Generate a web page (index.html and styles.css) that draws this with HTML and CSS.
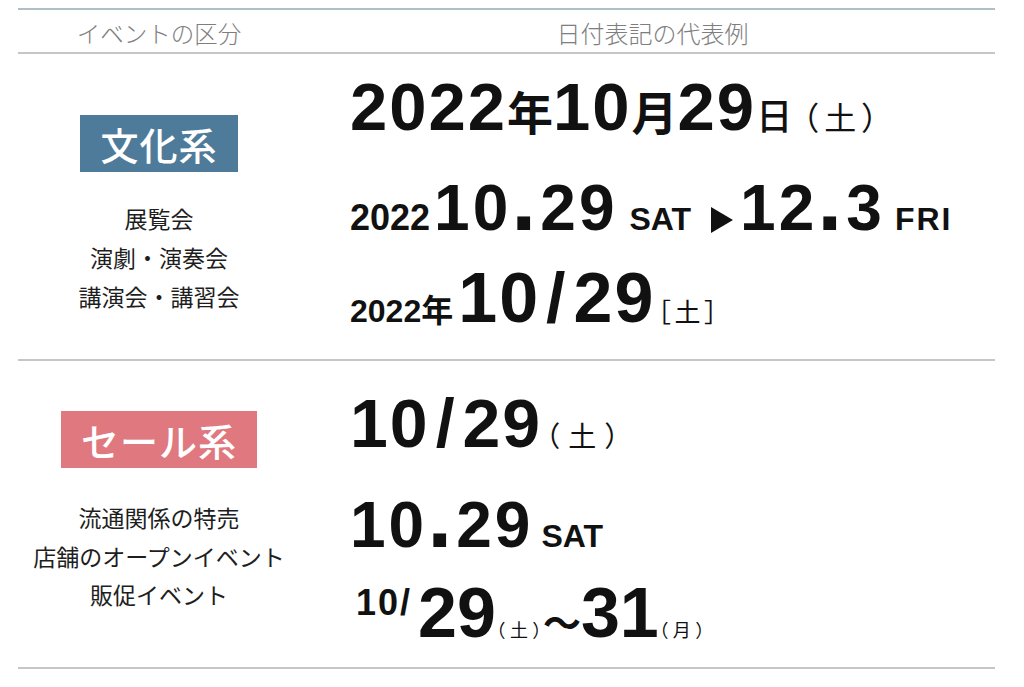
FILE: index.html
```html
<!DOCTYPE html>
<html lang="ja">
<head>
<meta charset="utf-8">
<title>日付表記</title>
<link rel="stylesheet" href="styles.css">
</head>
<body>
<div class="table">
  <div class="head">
    <div class="head-cell head-left">イベントの区分</div>
    <div class="head-cell head-right">日付表記の代表例</div>
  </div>

  <div class="section section-culture">
    <div class="cat">
      <div class="badge badge-blue">文化系</div>
      <ul class="examples">
        <li>展覧会</li>
        <li>演劇・演奏会</li>
        <li>講演会・講習会</li>
      </ul>
    </div>
    <div class="dates">
      <div class="row"><span class="n67">2022</span><span class="jp jb k46">年</span><span class="n67">10</span><span class="jp jb k46">月</span><span class="n67">29</span><span class="jp jm k36">日</span><span class="jp pp p32">（<span class="pin">土</span>）</span></div>
      <div class="row"><span class="n36">2022</span><span class="n64 ml4">10<span class="dot">.</span>29</span><span class="n32 ml12">SAT</span><svg class="arrow" viewBox="0 0 24 28" width="24" height="28"><path d="M1 1 L23 14 L1 27 Z" fill="#111"/></svg><span class="n64 ml6">12<span class="dot">.</span>3</span><span class="n32 fri ml10">FRI</span></div>
      <div class="row"><span class="n32">2022</span><span class="jp jb k32">年</span><span class="n70w ml5">10<span class="slash">/</span>29</span><span class="jp pp p26">［<span class="pin">土</span>］</span></div>
    </div>
  </div>

  <div class="section section-sale">
    <div class="cat">
      <div class="badge badge-pink">セール系</div>
      <ul class="examples">
        <li>流通関係の特売</li>
        <li>店舗のオープンイベント</li>
        <li>販促イベント</li>
      </ul>
    </div>
    <div class="dates">
      <div class="row row95"><span class="n68">10<span class="slash">/</span>29</span><span class="jp pp p28">（<span class="pin">土</span>）</span></div>
      <div class="row row95"><span class="n64">10<span class="dot">.</span>29</span><span class="n32 ml8">SAT</span></div>
      <div class="row row95"><span class="n36 sup ml6">10/</span><span class="n70 ml6">29</span><span class="jp pp p18">（<span class="pin">土</span>）</span><span class="jp jb wave">～</span><span class="n70">31</span><span class="jp pp p18">（<span class="pin">月</span>）</span></div>
    </div>
  </div>
</div>
</body>
</html>
```
FILE: styles.css
```css
* { box-sizing: border-box; }

body {
  margin: 0;
  background: #ffffff;
  color: #111111;
  font-family: "Noto Sans CJK JP", sans-serif;
}

.table {
  margin: 8px 0 0 18px;
  width: 977px;
  border-top: 2px solid #aebfc7;
}

.head {
  display: grid;
  grid-template-columns: 282px 1fr;
  height: 44px;
  border-bottom: 2px solid #c6c6c6;
}

.head-cell {
  padding-top: 4px;
  line-height: 38px;
  font-size: 23.5px;
  font-weight: 300;
  color: #7e7e7e;
  text-align: center;
  font-family: "Noto Sans CJK JP", sans-serif;
}

.head-right { padding-left: 10px; font-size: 24px; }

.section {
  display: grid;
  grid-template-columns: 282px 1fr;
  border-bottom: 2px solid #c6c6c6;
}

.cat {
  display: flex;
  flex-direction: column;
  align-items: center;
}

.section-culture .cat { padding-top: 61px; }
.section-sale .cat { padding-top: 50px; }

.badge {
  height: 57px;
  line-height: 57px;
  padding: 0 20px;
  font-size: 38px;
  font-weight: 500;
  color: #ffffff;
  letter-spacing: 1px;
}

.badge-blue { background: #4f7b9b; }
.badge-pink { background: #e0787f; }

.examples {
  list-style: none;
  margin: 0;
  padding: 0;
  text-align: center;
  font-size: 23px;
  color: #1e1e1e;
}

.section-culture .examples { margin-top: 27px; line-height: 39px; }
.section-sale .examples { margin-top: 30px; line-height: 38.5px; }

.dates {
  padding-left: 50px;
}

.section-culture .dates { padding-top: 4px; padding-bottom: 13px; }
.section-sale .dates { padding-top: 15px; padding-bottom: 6px; }

.row {
  height: 96px;
  line-height: 96px;
  font-family: "Liberation Sans", Arial, sans-serif;
  font-size: 70px;
  font-weight: 700;
  white-space: nowrap;
}

.row95 { height: 95px; line-height: 95px; }

.row span { line-height: 1; }

.n67 { font-size: 67px; letter-spacing: 2px; }
.n70 { font-size: 70px; }
.n70w { font-size: 70px; letter-spacing: 2px; }
.n68 { font-size: 68px; letter-spacing: 2px; }
.n64 { font-size: 64px; letter-spacing: 3px; }
.n36 { font-size: 36px; }
.n32 { font-size: 32px; }
.fri { letter-spacing: 2px; }

.dot { font-size: 90px; letter-spacing: 4px; }
.slash { margin: 0 6px; }

.jp { font-family: "Noto Sans CJK JP", sans-serif; font-weight: 400; }
.jb { font-weight: 700; }
.jm { font-weight: 500; }
.k46 { font-size: 46px; }
.k36 { font-size: 36px; }
.k32 { font-size: 32px; }

.pp { font-feature-settings: "palt" 1; }
.p32 { font-size: 32px; margin-left: 10px; }
.p32 .pin { margin: 0 6px; }
.p28 { font-size: 28px; margin-left: 3px; }
.p28 .pin { margin: 0 9px; }
.p26 { font-size: 26px; margin-left: 2px; }
.p26 .pin { margin: 0 4px; }
.p18 { font-size: 18px; }
.p18 .pin { margin: 0 5px; }

.wave { font-size: 38px; margin-left: 1px; }

.sup { vertical-align: 22px; letter-spacing: 2px; }

.arrow { margin-left: 19px; vertical-align: -4px; }

.ml4 { margin-left: 4px; }
.ml5 { margin-left: 5px; }
.ml6 { margin-left: 6px; }
.ml8 { margin-left: 8px; }
.ml10 { margin-left: 10px; }
.ml12 { margin-left: 12px; }
```
